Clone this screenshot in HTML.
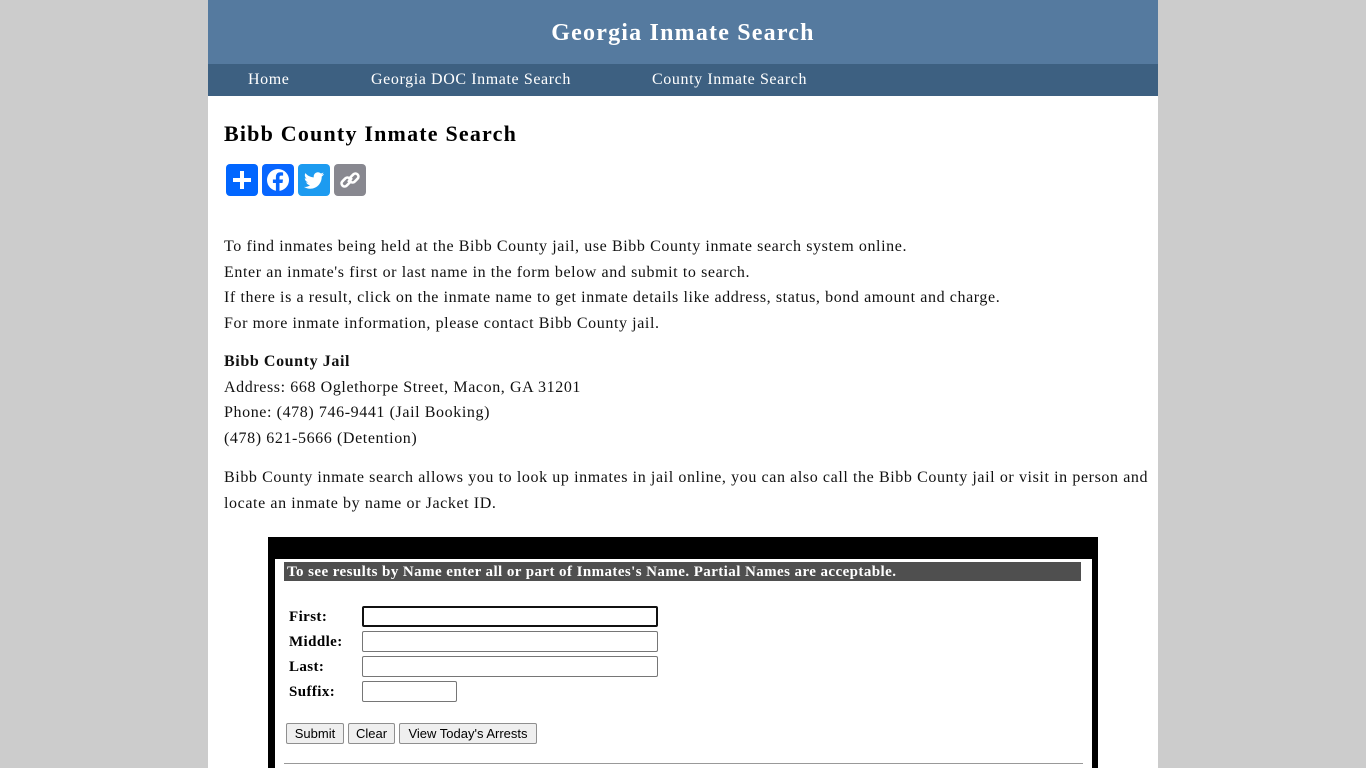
<!DOCTYPE html>
<html><head><meta charset="utf-8"><style>
body{margin:0;background:#ccc;font-family:"Liberation Serif",serif;}
.wrap{position:absolute;left:208px;top:0;width:950px;height:768px;background:#fff;overflow:hidden}
.hdr{height:64px;background:#557a9f;color:#fff;text-align:center;font-weight:bold;font-size:24px;line-height:66px;letter-spacing:1.2px}
.nav{height:32px;background:#3d6081;color:#fff;font-size:16px;line-height:32px;position:relative;letter-spacing:0.6px}
.nav span{position:absolute;top:0}
h1{position:absolute;left:16px;top:121px;margin:0;font-size:22px;letter-spacing:1.2px}
.icons{position:absolute;left:18px;top:164px}
.icons div{position:absolute;top:0;width:32px;height:32px;border-radius:4px}
.txt{position:absolute;left:16px;font-size:16px;line-height:25.7px;color:#111;letter-spacing:0.6px}
.box{position:absolute;left:60px;top:537px;width:830px;height:240px;background:#000}
.inner{position:absolute;left:7px;top:22px;width:817px;height:220px;background:#fff}
.bar{position:absolute;left:9px;top:3px;width:797px;height:19px;background:#4f4f4f;color:#fff;font-weight:bold;font-size:15px;line-height:21px;padding-left:3px;box-sizing:border-box;letter-spacing:0.42px;white-space:nowrap;overflow:hidden}
.lbl{position:absolute;left:14px;font-weight:bold;font-size:15px;letter-spacing:0.4px}
.in{position:absolute;left:87px;height:19px;border:1px solid #767676;border-radius:2px;box-sizing:border-box}
.btn{position:absolute;top:164px;height:21px;border:1px solid #8f8f8f;border-radius:2px;background:#efefef;font-family:"Liberation Sans",sans-serif;font-size:13px;line-height:19px;text-align:center;box-sizing:border-box}
</style></head><body><div class="wrap">
<div class="hdr">Georgia Inmate Search</div>
<div class="nav"><span style="left:40px">Home</span><span style="left:163px">Georgia DOC Inmate Search</span><span style="left:444px">County Inmate Search</span></div>
<h1>Bibb County Inmate Search</h1>
<div class="icons">
<div style="left:0;background:#0166ff"><svg width="32" height="32"><path d="M16 7v18M7 16h18" stroke="#fff" stroke-width="4"/></svg></div>
<div style="left:36px;background:#0866ff"><svg width="32" height="32"><circle cx="16" cy="16" r="11" fill="#fff"/><path d="M17.5 28v-9h3l.5-3.5h-3.5v-2.2c0-1 .3-1.7 1.8-1.7h1.8V8.5c-.3 0-1.4-.2-2.7-.2-2.7 0-4.5 1.6-4.5 4.6v2.6h-3V19h3v9z" fill="#0866ff"/></svg></div>
<div style="left:72px;background:#1d9bf0"><svg width="32" height="32"><path d="M26 10c-.7.3-1.5.6-2.3.7.8-.5 1.5-1.3 1.8-2.2-.8.5-1.7.8-2.6 1-1.6-1.7-4.4-1.7-6 0-1 1-1.4 2.5-1.1 3.9-3.3-.2-6.3-1.7-8.4-4.3-1.1 1.9-.5 4.3 1.3 5.5-.7 0-1.3-.2-1.9-.5 0 2 1.4 3.7 3.3 4.1-.6.2-1.3.2-1.9.1.5 1.7 2.1 2.8 3.8 2.9-1.7 1.3-3.9 2-6.1 1.7 1.9 1.2 4 1.8 6.2 1.8 7.5 0 11.6-6.2 11.6-11.6v-.5c.8-.6 1.5-1.3 2.1-2.1z" fill="#fff"/></svg></div>
<div style="left:108px;background:#888890"><svg width="32" height="32" fill="none" stroke="#fff" stroke-width="2.6"><path d="M14 18l4-4"/><rect x="7" y="15" width="10" height="6" rx="3" transform="rotate(-45 12 18)"/><rect x="15" y="11" width="10" height="6" rx="3" transform="rotate(-45 20 14)"/></svg></div>
</div>
<div class="txt" style="top:234px">To find inmates being held at the Bibb County jail, use Bibb County inmate search system online.<br>Enter an inmate's first or last name in the form below and submit to search.<br>If there is a result, click on the inmate name to get inmate details like address, status, bond amount and charge.<br>For more inmate information, please contact Bibb County jail.</div>
<div class="txt" style="top:349px"><b>Bibb County Jail</b><br>Address: 668 Oglethorpe Street, Macon, GA 31201<br>Phone: (478) 746-9441 (Jail Booking)<br>(478) 621-5666 (Detention)</div>
<div class="txt" style="top:465px;width:925px">Bibb County inmate search allows you to look up inmates in jail online, you can also call the Bibb County jail or visit in person and<br>locate an inmate by name or Jacket ID.</div>
<div class="box"><div class="inner">
<div class="bar">To see results by Name enter all or part of Inmates's Name. Partial Names are acceptable.</div>
<div class="lbl" style="top:50px">First:</div><div class="in" style="width:296px;border:2px solid #111;height:21px;top:47px"></div>
<div class="lbl" style="top:75px">Middle:</div><div class="in" style="top:72px;width:296px;height:21px"></div>
<div class="lbl" style="top:100px">Last:</div><div class="in" style="top:97px;width:296px;height:21px"></div>
<div class="lbl" style="top:125px">Suffix:</div><div class="in" style="top:122px;width:95px;height:21px"></div>
<div class="btn" style="left:11px;width:58px">Submit</div>
<div class="btn" style="left:73px;width:47px">Clear</div>
<div class="btn" style="left:124px;width:138px">View Today's Arrests</div>
<div style="position:absolute;left:9px;top:204px;width:799px;height:1px;background:#999"></div>
</div></div>
</div></body></html>
